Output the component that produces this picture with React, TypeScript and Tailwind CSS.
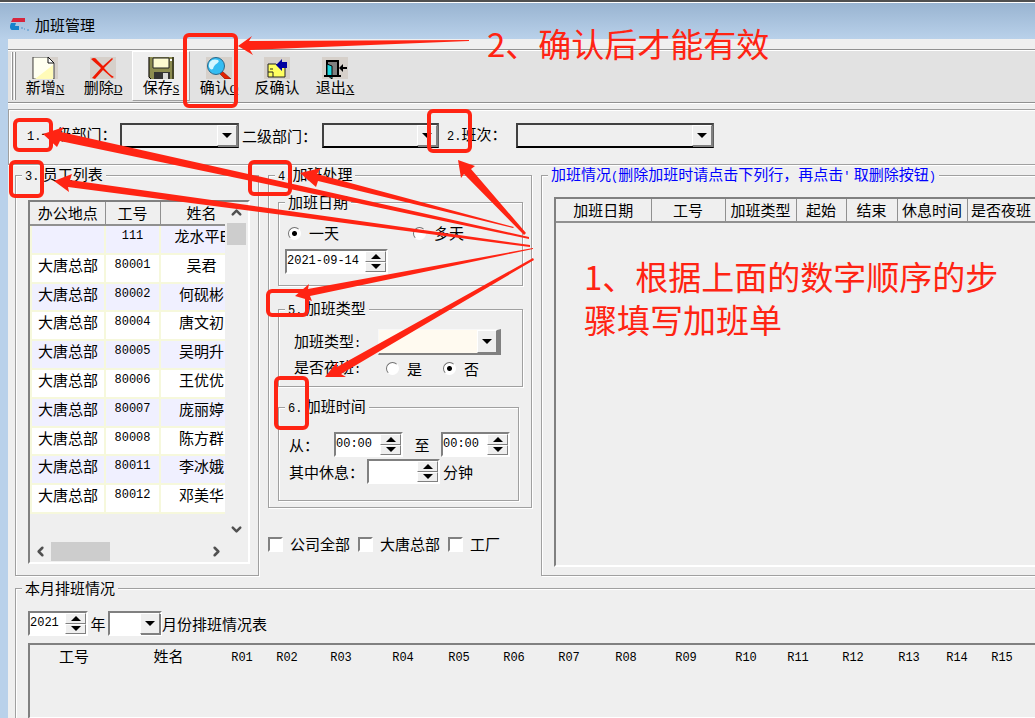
import type { ReactNode } from 'react'
import { ChevronDown, ChevronLeft, ChevronRight, ChevronUp } from 'lucide-react'

const employees = [
  { place: '', no: '111', name: '龙水平E' },
  { place: '大唐总部', no: '80001', name: '吴君' },
  { place: '大唐总部', no: '80002', name: '何砚彬' },
  { place: '大唐总部', no: '80004', name: '唐文初' },
  { place: '大唐总部', no: '80005', name: '吴明升' },
  { place: '大唐总部', no: '80006', name: '王优优' },
  { place: '大唐总部', no: '80007', name: '庞丽婷' },
  { place: '大唐总部', no: '80008', name: '陈方群' },
  { place: '大唐总部', no: '80011', name: '李冰娥' },
  { place: '大唐总部', no: '80012', name: '邓美华' },
]

const overtimeColumns = [
  { label: '加班日期', width: 95 },
  { label: '工号', width: 74 },
  { label: '加班类型', width: 71 },
  { label: '起始', width: 50 },
  { label: '结束', width: 51 },
  { label: '休息时间', width: 70 },
  { label: '是否夜班', width: 68 },
]

const scheduleColumns = [
  { label: '工号', width: 88 },
  { label: '姓名', width: 101 },
  { label: 'R01', width: 46 },
  { label: 'R02', width: 44 },
  { label: 'R03', width: 64 },
  { label: 'R04', width: 60 },
  { label: 'R05', width: 52 },
  { label: 'R06', width: 58 },
  { label: 'R07', width: 52 },
  { label: 'R08', width: 62 },
  { label: 'R09', width: 58 },
  { label: 'R10', width: 62 },
  { label: 'R11', width: 42 },
  { label: 'R12', width: 68 },
  { label: 'R13', width: 44 },
  { label: 'R14', width: 52 },
  { label: 'R15', width: 38 },
]

const sunken = 'border-2 border-t-[#808080] border-l-[#808080] border-r-white border-b-white'
const raised = 'border border-t-white border-l-white border-r-[#808080] border-b-[#808080] bg-[#efefef]'
const mono = "[font-family:'Liberation_Mono','Noto_Sans_CJK_SC',monospace] text-[12px]"

function Num({ children }: { children: ReactNode }) {
  return <span className={`${mono} inline-block`}>{children}</span>
}

function Group({ legend, className = '', children }: { legend: ReactNode; className?: string; children: ReactNode }) {
  return (
    <fieldset className={`min-w-0 border border-[#a0a0a0] px-[6px] shadow-[1px_1px_0_#fff,inset_1px_1px_0_#fff] ${className}`}>
      <legend className="bg-[#efefef] px-[3px] leading-4">{legend}</legend>
      {children}
    </fieldset>
  )
}

function Arrow({ up = false }: { up?: boolean }) {
  return (
    <svg viewBox="0 0 10 5" className="h-[5px] w-[10px]" aria-hidden="true">
      <path d={up ? 'M0 5 L5 0 L10 5 Z' : 'M0 0 L5 5 L10 0 Z'} fill="#000" />
    </svg>
  )
}

function Combo({ label, className = '', buttonClass = 'w-5' }: { label: string; className?: string; buttonClass?: string }) {
  return (
    <div className={`relative ${className}`}>
      <select aria-label={label} className="block h-full w-full appearance-none bg-transparent outline-none">
        <option value=""></option>
      </select>
      <span className={`pointer-events-none absolute inset-y-0 right-0 flex items-center justify-center shadow-[1px_1px_0_#808080] ${raised} ${buttonClass}`}>
        <Arrow />
      </span>
    </div>
  )
}

function Spin({ label, value, className = '' }: { label: string; value: string; className?: string }) {
  return (
    <div className={`flex h-[25px] bg-white ${sunken} ${className}`}>
      <input aria-label={label} defaultValue={value} className={`${mono} min-w-0 flex-1 pb-0.5 outline-none`} />
      <div className="flex w-[21px] flex-col">
        <button type="button" aria-label={`${label} 增加`} className={`flex flex-1 items-center justify-center ${raised}`}>
          <Arrow up />
        </button>
        <button type="button" aria-label={`${label} 减少`} className={`flex flex-1 items-center justify-center ${raised}`}>
          <Arrow />
        </button>
      </div>
    </div>
  )
}

function Radio({ name, label, checked, className = '' }: { name: string; label: string; checked?: boolean; className?: string }) {
  return (
    <label className={`flex h-4 items-center gap-2 leading-4 ${className}`}>
      <input
        type="radio"
        name={name}
        defaultChecked={checked}
        className="size-[13px] appearance-none rounded-full border border-t-[#707070] border-l-[#707070] border-r-white border-b-white bg-white checked:bg-[radial-gradient(circle,#000_2px,#fff_3px)]"
      />
      {label}
    </label>
  )
}

function Check({ label }: { label: string }) {
  return (
    <label className="flex items-center gap-[7px] leading-4">
      <input type="checkbox" className={`size-[15px] appearance-none bg-white checked:bg-black ${sunken}`} />
      {label}
    </label>
  )
}

function ToolButton({ label, hotkey, active, children }: { label: string; hotkey?: string; active?: boolean; children: ReactNode }) {
  return (
    <button
      type="button"
      className={`flex w-[58px] flex-col items-center border pt-[5px] ${active ? 'border-t-white border-l-white border-r-[#a0a0a0] border-b-[#a0a0a0] bg-[#efefef]' : 'border-transparent'}`}
    >
      <span className="h-[22px] w-[26px] bg-[#d6d0ca]">{children}</span>
      <span className="leading-4 whitespace-nowrap">
        {label}
        {hotkey && <u className="[font-family:'Liberation_Serif',serif] text-[12px]">{hotkey}</u>}
      </span>
    </button>
  )
}

function Toolbar() {
  return (
    <div className="mt-[10px] flex h-[54px] border-y border-[#909090] bg-[#e2e2e2] pl-[3px] shadow-[inset_0_1px_0_#fff,0_1px_0_#fff]">
      <div className="flex w-[5px] justify-between py-[2px]">
        <span className="w-[2px] border-r border-[#909090] bg-white" />
        <span className="w-[2px] border-r border-[#909090] bg-white" />
      </div>
      <div className="flex py-px">
        <ToolButton label="新增" hotkey="N">
          <svg viewBox="0 0 26 22" className="h-full w-full">
            <path d="M1 0H16L22 6V22H1Z" fill="#fffff0" stroke="#444" />
            <path d="M3 22L21 8V22Z" fill="#fffbb8" />
            <path d="M16 0V6H22Z" fill="#fff" stroke="#111" />
          </svg>
        </ToolButton>
        <ToolButton label="删除" hotkey="D">
          <svg viewBox="0 0 26 22" className="h-full w-full">
            <path d="M1 2C4 0 6 1 7 3L13 9L22 1L23 2L14 11C17 14 20 18 24 20L22 21L13 13L5 22L2 21L11 11C8 8 4 5 1 2Z" fill="#f01800" />
          </svg>
        </ToolButton>
        <ToolButton label="保存" hotkey="S" active>
          <svg viewBox="0 0 26 22" className="h-full w-full">
            <path d="M1 0H26V22H3L1 20Z" fill="#8c8c50" />
            <path d="M1 0V20L3 22M25 0V22" fill="none" stroke="#000" />
            <path d="M5 1H21V11H5Z" fill="#fdfbd0" stroke="#222" />
            <path d="M6 15H22V22H6Z" fill="#333" />
            <path d="M15 16H20V22H15Z" fill="#d8d8d8" />
            <path d="M22 2H24V4H22Z" fill="#fff" />
          </svg>
        </ToolButton>
        <ToolButton label="确认" hotkey="Q">
          <svg viewBox="0 0 26 22" className="h-full w-full">
            <path d="M16 14L25 22H19L14 17Z" fill="#e32200" stroke="#801000" strokeWidth=".6" />
            <circle cx="10" cy="9" r="8.5" fill="#35bdf2" stroke="#2a6688" strokeWidth="1" />
            <path d="M3 10C2 4 7 1 12 3C15 6 8 6 7 12C5 13 4 12 3 10Z" fill="#d7f7ff" />
          </svg>
        </ToolButton>
        <ToolButton label="反确认">
          <svg viewBox="0 0 26 22" className="h-full w-full">
            <path d="M4 7H12L14 9H21V20H4Z" fill="#ffff60" stroke="#222" />
            <path d="M4 15H9V20M6 12H9" fill="none" stroke="#222" />
            <path d="M12 8L18 2V5H23V11H18V14Z" fill="#0000a0" />
          </svg>
        </ToolButton>
        <ToolButton label="退出" hotkey="X">
          <svg viewBox="0 0 26 22" className="h-full w-full">
            <path d="M5 4H16V19H5Z" fill="#808080" stroke="#000" strokeWidth="2" />
            <path d="M5 7L10 9V22L5 18Z" fill="#20d8e0" stroke="#000" />
            <path d="M2 19H19" stroke="#000" strokeWidth="2" />
            <path d="M17 11L21 7V10H25V12H21V15Z" fill="#000" />
          </svg>
        </ToolButton>
      </div>
    </div>
  )
}

function FilterBar() {
  const box = 'h-[25px] border-2 border-t-[#404040] border-l-[#404040] border-r-[#606060] border-b-black bg-[#efefef]'
  return (
    <div className="mt-[6px] flex h-[56px] items-center border-y border-l border-[#a0a0a0] pb-[3px] pl-[18px] whitespace-nowrap shadow-[inset_1px_1px_0_#fff,0_1px_0_#fff]">
      <span className="w-[93px] shrink-0"><Num>1.</Num>一级部门：</span>
      <Combo label="一级部门" className={`w-[119px] shrink-0 ${box}`} />
      <span className="w-[83px] shrink-0 pl-[3px]">二级部门：</span>
      <Combo label="二级部门" className={`w-[117px] shrink-0 ${box}`} />
      <span className="w-[77px] shrink-0 pl-2"><Num>2.</Num>班次：</span>
      <Combo label="班次" className={`w-[198px] shrink-0 ${box}`} />
    </div>
  )
}

function EmployeeList() {
  return (
    <Group legend={<><Num>3.</Num> 员工列表</>} className="w-[244px] shrink-0 pb-[11px]">
      <div className={`mt-[15px] ml-[6px] mr-[2px] h-[364px] ${sunken}`}>
        <div className="flex h-[339px]">
          <div className="min-w-0 flex-1 overflow-hidden">
            <table className="h-[312px] w-[212px] table-fixed border-collapse">
              <colgroup>
                <col className="w-[74px]" />
                <col className="w-[55px]" />
                <col className="w-[83px]" />
              </colgroup>
              <thead>
                <tr className="h-[23px]">
                  {['办公地点', '工号', '姓名'].map((h) => (
                    <th key={h} className="border-r border-b-2 border-[#909090] p-0 leading-4 font-normal">{h}</th>
                  ))}
                </tr>
              </thead>
              <tbody>
                {employees.map((e) => (
                  <tr key={e.no} className="bg-white align-top odd:bg-[#f0f0ff]">
                    <td className="border-2 border-[#f6f8dc] p-0 text-center leading-[20px]">{e.place}</td>
                    <td className={`${mono} border-2 border-[#f6f8dc] p-0 text-center leading-[20px]`}>{e.no}</td>
                    <td className="border-2 border-[#f6f8dc] p-0 text-center leading-[20px] whitespace-nowrap">{e.name}</td>
                  </tr>
                ))}
              </tbody>
            </table>
          </div>
          <div className="flex w-[23px] flex-col items-center text-[#505050]">
            <ChevronUp size={15} strokeWidth={4} className="my-[3px]" />
            <div className="h-[22px] w-[19px] bg-[#cdcdcd]" />
            <ChevronDown size={15} strokeWidth={4} className="mt-auto mb-1" />
          </div>
        </div>
        <div className="flex h-5 items-center text-[#505050]">
          <ChevronLeft size={15} strokeWidth={4} className="mx-[3px]" />
          <div className="h-[19px] w-[59px] bg-[#cdcdcd]" />
          <ChevronRight size={15} strokeWidth={4} className="mr-6 ml-auto" />
        </div>
      </div>
    </Group>
  )
}

function OvertimeForm() {
  return (
    <div className="w-[264px] shrink-0">
      <Group legend={<><Num>4.</Num>加班处理</>} className="pb-[6px]">
        <div className="mt-[9px] ml-[3px] mr-[2px]">
          <Group legend="加班日期" className="pb-[11px]">
            <div className="mt-[15px] flex pl-[3px]">
              <Radio name="days" label="一天" checked className="w-[125px]" />
              <Radio name="days" label="多天" />
            </div>
            <Spin label="加班日期" value="2021-09-14" className="mt-2 w-[103px]" />
          </Group>
          <Group legend={<><Num>5.</Num> 加班类型</>} className="mt-[14px] pb-2">
            <div className="mt-[10px] flex items-center pl-[9px]">
              <span className="w-[84px]">加班类型<Num>:</Num></span>
              <Combo
                label="加班类型"
                className="h-[26px] w-[123px] border-t border-l border-r-4 border-b-2 border-t-[#f8f8f8] border-l-[#f8f8f8] border-r-[#808080] border-b-[#808080] bg-[#fffaf0]"
              />
            </div>
            <div className="mt-1 flex items-center pl-[9px] leading-4">
              <span className="w-[92px]">是否夜班<Num>:</Num></span>
              <Radio name="night" label="是" className="w-[57px]" />
              <Radio name="night" label="否" checked />
            </div>
          </Group>
          <Group legend={<><Num>6.</Num> 加班时间</>} className="mt-[11px] mr-1 pb-4">
            <div className="mt-[15px] flex items-center pl-1">
              <span className="w-[45px]">从：</span>
              <Spin label="开始时间" value="00:00" className="w-[69px]" />
              <span className="w-[38px] text-center">至</span>
              <Spin label="结束时间" value="00:00" className="w-[69px]" />
            </div>
            <div className="mt-[2px] flex items-center pl-1">
              <span className="w-[78px]">其中休息：</span>
              <Spin label="其中休息" value="" className="w-[73px]" />
              <span className="pl-[3px]">分钟</span>
            </div>
          </Group>
        </div>
      </Group>
      <div className="mt-7 flex gap-2">
        <Check label="公司全部" />
        <Check label="大唐总部" />
        <Check label="工厂" />
      </div>
    </div>
  )
}

function OvertimeRecords() {
  return (
    <Group
      legend={<span className="text-[#0000ff]">加班情况<Num>(</Num>删除加班时请点击下列行，再点击<Num>'</Num> 取删除按钮<Num>)</Num></span>}
      className="-mr-4 flex-1"
    >
      <div className={`mt-[12px] ml-[6px] h-[370px] overflow-hidden ${sunken}`}>
        <table className="w-[479px] table-fixed border-collapse">
          <thead>
            <tr className="h-[23px]">
              {overtimeColumns.map((c) => (
                <th key={c.label} style={{ width: c.width }} className="border-r border-b-2 border-[#909090] p-0 leading-4 font-normal whitespace-nowrap">
                  {c.label}
                </th>
              ))}
            </tr>
          </thead>
        </table>
      </div>
    </Group>
  )
}

function Schedule() {
  return (
    <Group legend="本月排班情况" className="mt-1 -mr-4 ml-[7px] flex flex-1 flex-col">
      <div className="mt-[15px] ml-[6px] flex items-center">
        <Spin label="年" value="2021" className="w-[60px]" />
        <span className="w-5 text-center">年</span>
        <Combo label="月份" className={`h-[25px] w-[54px] bg-white ${sunken}`} />
        <span>月份排班情况表</span>
      </div>
      <div className={`mt-[7px] ml-[6px] min-h-[76px] flex-1 overflow-hidden ${sunken}`}>
        <table className="w-[991px] table-fixed border-collapse">
          <thead>
            <tr className="h-[22px]">
              {scheduleColumns.map((c) => (
                <th key={c.label} style={{ width: c.width }} className="p-0 leading-4 font-normal">
                  {c.label.startsWith('R') ? <Num>{c.label}</Num> : c.label}
                </th>
              ))}
            </tr>
          </thead>
        </table>
      </div>
    </Group>
  )
}

// hand-drawn red marks that float over the window
function Annotations() {
  return (
    <div className="pointer-events-none absolute inset-0 [font-family:'Noto_Sans_CJK_SC',sans-serif] text-[33px] leading-[43px] text-[#ff2413]">
      <svg width="1035" height="718" viewBox="0 0 1035 718" className="absolute top-0 left-0" aria-hidden="true">
        <g fill="none" stroke="#ff2413" strokeWidth="4">
          <rect x="15" y="120" width="36" height="30" rx="4" />
          <rect x="185" y="35" width="51" height="71" rx="4" />
          <rect x="429" y="111" width="41" height="40" rx="4" />
          <rect x="11" y="162" width="31" height="34" rx="4" />
          <rect x="250" y="162" width="40" height="32" rx="4" />
          <rect x="268" y="291" width="39" height="24" rx="4" />
          <rect x="276" y="378" width="31" height="50" rx="4" />
        </g>
        <g fill="#ff2413">
          <path d="M238 46L252 36L249 41L469 40V41L250 50L253 55Z" />
          <path d="M43 134L64 127L61 132L529 237V239L60 141L57 147Z" />
          <path d="M54 181L72 174L70 180L530 245V247L68 187L69 192Z" />
          <path d="M300 173L321 168L317 174L514 227L513 228L318 181L316 187Z" />
          <path d="M458 160L475 166L471 169L526 233L524 235L464 174L461 178Z" />
          <path d="M295 296L309 284L308 289L533 248V249L310 296L312 301Z" />
          <path d="M325 377L337 362V367L533 258L534 260L341 374L346 377Z" />
        </g>
      </svg>
      <p className="absolute top-[22px] left-[487px] whitespace-nowrap">2、确认后才能有效</p>
      <p className="absolute top-[255px] left-[584px] w-[424px]">1、根据上面的数字顺序的步骤填写加班单</p>
    </div>
  )
}

export default function App() {
  return (
    <div className="relative flex min-h-screen flex-col overflow-hidden bg-[#b9d1ea] text-[15px] leading-4 text-black [font-family:'Noto_Sans_CJK_SC',sans-serif]">
      <div className="h-[2px] bg-[#505050]" />
      <header className="flex h-[37px] items-center gap-[6px] border-t border-white bg-linear-to-b from-[#99b4d1] to-[#b9d1ea] pt-2 pl-[10px]">
        <svg viewBox="0 0 19 14" className="h-[14px] w-[19px]" aria-hidden="true">
          <path d="M3 0H15V4H1Z" fill="#d7263d" />
          <path d="M1 5H6L5 8H9V12H3C0 12-1 9 1 5Z" fill="#1683cc" />
          <path d="M11 10H13M14 11H15M17 12H19" stroke="#4c94cc" />
        </svg>
        <h1>加班管理</h1>
      </header>
      <main className="ml-2 flex flex-1 flex-col bg-[#efefef]">
        <Toolbar />
        <FilterBar />
        <div className="mt-px ml-[7px] flex gap-[9px]">
          <EmployeeList />
          <OvertimeForm />
          <OvertimeRecords />
        </div>
        <Schedule />
      </main>
      <Annotations />
    </div>
  )
}
